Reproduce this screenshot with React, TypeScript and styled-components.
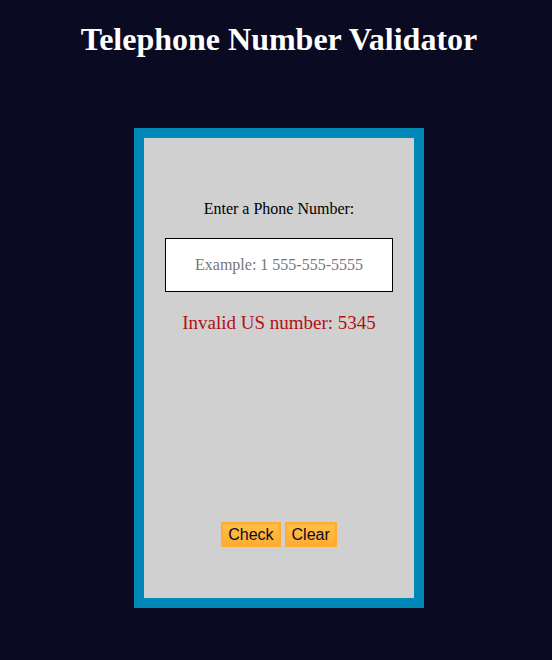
import React from "react";
import styled, { createGlobalStyle } from "styled-components";

const Global = createGlobalStyle`
  html, body { margin: 0; padding: 0; background: #0a0a23; }
  body { font-family: "Liberation Serif", "Times New Roman", serif; }
`;

const Page = styled.main`
  display: flex;
  flex-direction: column;
  align-items: center;
  padding-left: 6px;
  min-height: 660px;
  box-sizing: border-box;
`;

const Title = styled.h1`
  margin: 21px 0 0;
  color: #ffffff;
  font-size: 32px;
  font-weight: bold;
  line-height: 37px;
`;

const Frame = styled.div`
  margin-top: 70px;
  width: 290px;
  height: 480px;
  box-sizing: border-box;
  border: 10px solid #0088b8;
  background: #d0d0d0;
  display: flex;
  flex-direction: column;
  align-items: center;
  padding: 62px 0 51px;
`;

const Label = styled.label`
  font-size: 16px;
  color: #000;
  line-height: 18px;
`;

const Input = styled.input`
  margin-top: 20px;
  width: 228px;
  height: 54px;
  box-sizing: border-box;
  border: 1px solid #000;
  background: #fff;
  text-align: center;
  font-family: "Liberation Serif", "Times New Roman", serif;
  font-size: 16px;
  outline: none;
  &::placeholder { color: #777; }
`;

const Result = styled.div`
  margin-top: 20px;
  color: #b01010;
  font-size: 19px;
  line-height: 22px;
`;

const Buttons = styled.div`
  margin-top: auto;
  display: flex;
  gap: 4px;
`;

const Button = styled.button`
  height: 25px;
  padding: 0 5px;
  border: 2px solid #feac32;
  background-color: #feac32;
  background-image: linear-gradient(#fec043, #ffac33);
  color: #0a0a23;
  font-family: "Liberation Sans", Arial, sans-serif;
  font-size: 16px;
  line-height: 19px;
  cursor: pointer;
`;

export default function App() {
  return (
    <>
      <Global />
      <Page>
        <Title>Telephone Number Validator</Title>
        <Frame>
          <Label htmlFor="user-input">Enter a Phone Number:</Label>
          <Input id="user-input" placeholder="Example: 1 555-555-5555" />
          <Result>Invalid US number: 5345</Result>
          <Buttons>
            <Button>Check</Button>
            <Button>Clear</Button>
          </Buttons>
        </Frame>
      </Page>
    </>
  );
}
